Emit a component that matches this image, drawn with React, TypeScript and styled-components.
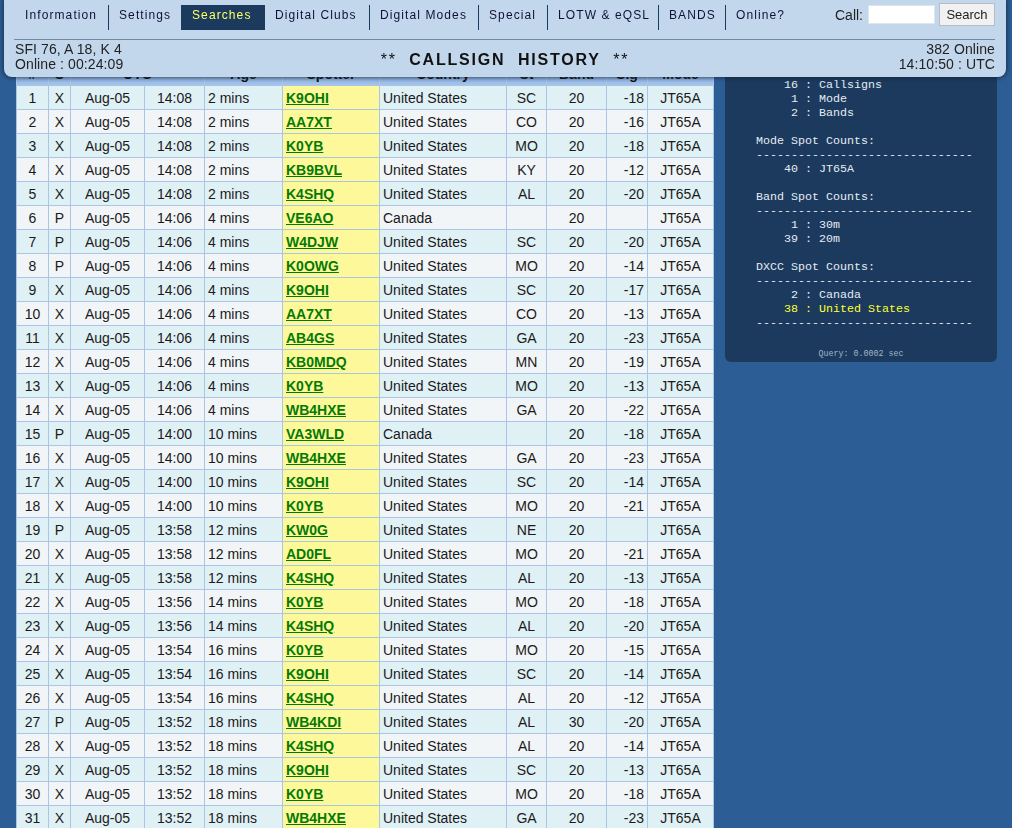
import styled, { createGlobalStyle } from "styled-components";

const GlobalStyle = createGlobalStyle`
  html, body {
    margin: 0;
    padding: 0;
    height: 828px;
    overflow: hidden;
    background: #2c5d95;
    font-family: "Liberation Sans", Arial, sans-serif;
  }
`;

type Spot = [string, string, string, string, string, string, string, string, string];

// flag, utc, age, spotter, country, state, band, sig, mode
const SPOTS: Spot[] = [
  ["X", "14:08", "2 mins", "K9OHI", "United States", "SC", "20", "-18", "JT65A"],
  ["X", "14:08", "2 mins", "AA7XT", "United States", "CO", "20", "-16", "JT65A"],
  ["X", "14:08", "2 mins", "K0YB", "United States", "MO", "20", "-18", "JT65A"],
  ["X", "14:08", "2 mins", "KB9BVL", "United States", "KY", "20", "-12", "JT65A"],
  ["X", "14:08", "2 mins", "K4SHQ", "United States", "AL", "20", "-20", "JT65A"],
  ["P", "14:06", "4 mins", "VE6AO", "Canada", "", "20", "", "JT65A"],
  ["P", "14:06", "4 mins", "W4DJW", "United States", "SC", "20", "-20", "JT65A"],
  ["P", "14:06", "4 mins", "K0OWG", "United States", "MO", "20", "-14", "JT65A"],
  ["X", "14:06", "4 mins", "K9OHI", "United States", "SC", "20", "-17", "JT65A"],
  ["X", "14:06", "4 mins", "AA7XT", "United States", "CO", "20", "-13", "JT65A"],
  ["X", "14:06", "4 mins", "AB4GS", "United States", "GA", "20", "-23", "JT65A"],
  ["X", "14:06", "4 mins", "KB0MDQ", "United States", "MN", "20", "-19", "JT65A"],
  ["X", "14:06", "4 mins", "K0YB", "United States", "MO", "20", "-13", "JT65A"],
  ["X", "14:06", "4 mins", "WB4HXE", "United States", "GA", "20", "-22", "JT65A"],
  ["P", "14:00", "10 mins", "VA3WLD", "Canada", "", "20", "-18", "JT65A"],
  ["X", "14:00", "10 mins", "WB4HXE", "United States", "GA", "20", "-23", "JT65A"],
  ["X", "14:00", "10 mins", "K9OHI", "United States", "SC", "20", "-14", "JT65A"],
  ["X", "14:00", "10 mins", "K0YB", "United States", "MO", "20", "-21", "JT65A"],
  ["P", "13:58", "12 mins", "KW0G", "United States", "NE", "20", "", "JT65A"],
  ["X", "13:58", "12 mins", "AD0FL", "United States", "MO", "20", "-21", "JT65A"],
  ["X", "13:58", "12 mins", "K4SHQ", "United States", "AL", "20", "-13", "JT65A"],
  ["X", "13:56", "14 mins", "K0YB", "United States", "MO", "20", "-18", "JT65A"],
  ["X", "13:56", "14 mins", "K4SHQ", "United States", "AL", "20", "-20", "JT65A"],
  ["X", "13:54", "16 mins", "K0YB", "United States", "MO", "20", "-15", "JT65A"],
  ["X", "13:54", "16 mins", "K9OHI", "United States", "SC", "20", "-14", "JT65A"],
  ["X", "13:54", "16 mins", "K4SHQ", "United States", "AL", "20", "-12", "JT65A"],
  ["P", "13:52", "18 mins", "WB4KDI", "United States", "AL", "30", "-20", "JT65A"],
  ["X", "13:52", "18 mins", "K4SHQ", "United States", "AL", "20", "-14", "JT65A"],
  ["X", "13:52", "18 mins", "K9OHI", "United States", "SC", "20", "-13", "JT65A"],
  ["X", "13:52", "18 mins", "K0YB", "United States", "MO", "20", "-18", "JT65A"],
  ["X", "13:52", "18 mins", "WB4HXE", "United States", "GA", "20", "-23", "JT65A"],
];

const COLUMNS: [string, number][] = [
  ["#", 1], ["S", 1], ["UTC", 2], ["Age", 1], ["Spotter", 1], ["Country", 1],
  ["St", 1], ["Band", 1], ["Sig", 1], ["Mode", 1],
];

const COL_WIDTHS = [32, 22, 74, 60, 78, 97, 127, 40, 60, 41, 66];

const NAV: [string, number][] = [
  ["Information", 94],
  ["Settings", 73],
  ["Searches", 83],
  ["Digital Clubs", 105],
  ["Digital Modes", 109],
  ["Special", 69],
  ["LOTW & eQSL", 111],
  ["BANDS", 67],
  ["Online?", 70],
];

const Header = styled.header`
  position: fixed;
  top: 0;
  left: 4px;
  width: 1002px;
  height: 77px;
  box-sizing: border-box;
  padding: 5px 11px 0 10px;
  background: #c3d7ec;
  border-radius: 0 0 8px 8px;
  box-shadow: 0 0 4px 1px rgba(20, 35, 55, 0.75);
  color: #111;
`;

const TopRow = styled.div`
  display: flex;
  justify-content: space-between;
  height: 34px;
  border-bottom: 1px solid #76889b;
`;

const Nav = styled.nav`
  display: flex;
  height: 25px;
  padding-left: 1px;
`;

const NavItem = styled.a<{ $active?: boolean; $last?: boolean; $width: number }>`
  display: block;
  box-sizing: border-box;
  width: ${(p) => p.$width}px;
  padding-left: 10px;
  line-height: 21px;
  font-size: 12px;
  letter-spacing: 1.1px;
  white-space: nowrap;
  color: ${(p) => (p.$active ? "#ffff66" : "#10103a")};
  background: ${(p) => (p.$active ? "#1c3a5e" : "transparent")};
  border-right: 1px solid ${(p) => (p.$last ? "transparent" : "#1c3a5e")};
`;

const SearchForm = styled.form`
  display: flex;
  align-items: flex-start;
  font-size: 14px;
  margin-top: -2px;
`;

const CallLabel = styled.label`
  margin: 4px 5px 0 0;
  color: #222;
`;

const CallInput = styled.input`
  width: 67px;
  height: 19px;
  margin: 2px 4px 0 0;
  padding: 0;
  box-sizing: border-box;
  border: 1px solid #dfe5ec;
  background: #fff;
`;

const SearchButton = styled.button`
  width: 56px;
  height: 23px;
  padding: 0;
  box-sizing: border-box;
  border: 1px solid #b8bcc2;
  background: #f1f1f1;
  color: #222;
  font-family: inherit;
  font-size: 13px;
`;

const BottomRow = styled.div`
  display: flex;
  justify-content: space-between;
  align-items: flex-start;
  font-size: 14px;
  line-height: 15px;
  padding: 2px 0 0 1px;
  color: #222;
`;

const SideInfo = styled.div<{ $right?: boolean }>`
  width: 200px;
  letter-spacing: 0.1px;
  text-align: ${(p) => (p.$right ? "right" : "left")};
`;

const Title = styled.div`
  margin-top: 8px;
  font-size: 16px;
  line-height: 19px;
  letter-spacing: 1.8px;
  white-space: pre;
  color: #111;
`;

const TitleText = styled.b`
  font-weight: bold;
`;

const Content = styled.main`
  display: flex;
  align-items: flex-start;
  gap: 11px;
  padding: 61px 0 0 16px;
`;

const Table = styled.table`
  width: 697px;
  table-layout: fixed;
  border-collapse: collapse;
  font-size: 14px;
  color: #1a1a1a;
  flex: none;
`;

const HeadCell = styled.th`
  height: 24px;
  padding: 0;
  box-sizing: border-box;
  font-size: 14px;
  font-weight: bold;
  color: #111;
  background: linear-gradient(#6f9bd6, #a4c4ec);
  border: 1px solid #a9c6e6;
`;

const Row = styled.tr<{ $odd: boolean }>`
  background: ${(p) => (p.$odd ? "#e0f1f6" : "#f1f5f7")};
`;

const Cell = styled.td<{ $align?: string; $spot?: boolean }>`
  height: 23px;
  padding: 0 3px;
  text-align: ${(p) => p.$align || "center"};
  white-space: nowrap;
  border: 1px solid #a9c6e6;
  background: ${(p) => (p.$spot ? "#fdf99b" : "transparent")};
`;

const SpotLink = styled.a`
  color: #047a04;
  font-weight: bold;
  text-decoration: underline;
`;

const StatsPanel = styled.aside`
  width: 272px;
  height: 301px;
  flex: none;
  box-sizing: border-box;
  padding: 17px 0 0 31px;
  background: #1c3a5e;
  border-radius: 0 0 6px 6px;
  font-family: "Liberation Mono", "Courier New", monospace;
  font-size: 11.67px;
  line-height: 14px;
  color: #e4ecf4;
  white-space: pre;
`;

const Line = styled.div<{ $gap?: boolean }>`
  height: 14px;
  margin-bottom: ${(p) => (p.$gap ? "14px" : "0")};
`;

const StatLine = styled(Line)<{ $hot?: boolean }>`
  padding-left: 28px;
  color: ${(p) => (p.$hot ? "#ffff33" : "inherit")};
`;

const Count = styled.span`
  display: inline-block;
  width: 14px;
  text-align: right;
`;

const QueryTime = styled.div`
  margin: 18px 0 0 -31px;
  text-align: center;
  font-size: 8.33px;
  line-height: 12px;
  color: #a3b4c6;
`;

const RULE = "-".repeat(31);

const Stat = ({ n, label, hot, gap }: { n: number; label: string; hot?: boolean; gap?: boolean }) => (
  <StatLine $hot={hot} $gap={gap}>
    <Count>{n}</Count>
    {` : ${label}`}
  </StatLine>
);

export default function App() {
  return (
    <>
      <GlobalStyle />
      <Header>
        <TopRow>
          <Nav>
            {NAV.map(([item, width], i) => (
              <NavItem key={item} $width={width} $active={item === "Searches"} $last={i === NAV.length - 1}>
                {item}
              </NavItem>
            ))}
          </Nav>
          <SearchForm>
            <CallLabel>Call:</CallLabel>
            <CallInput />
            <SearchButton type="button">Search</SearchButton>
          </SearchForm>
        </TopRow>
        <BottomRow>
          <SideInfo>
            SFI 76, A 18, K 4
            <br />
            Online : 00:24:09
          </SideInfo>
          <Title>
            {"**  "}
            <TitleText>CALLSIGN  HISTORY</TitleText>
            {"  **"}
          </Title>
          <SideInfo $right>
            382 Online
            <br />
            14:10:50 : UTC
          </SideInfo>
        </BottomRow>
      </Header>
      <Content>
        <Table>
          <colgroup>
            {COL_WIDTHS.map((w, i) => (
              <col key={i} width={w} />
            ))}
          </colgroup>
          <thead>
            <tr>
              {COLUMNS.map(([name, span]) => (
                <HeadCell key={name} colSpan={span}>
                  {name}
                </HeadCell>
              ))}
            </tr>
          </thead>
          <tbody>
            {SPOTS.map((s, i) => (
              <Row key={i} $odd={i % 2 === 0}>
                <Cell>{i + 1}</Cell>
                <Cell>{s[0]}</Cell>
                <Cell>Aug-05</Cell>
                <Cell>{s[1]}</Cell>
                <Cell $align="left">{s[2]}</Cell>
                <Cell $align="left" $spot>
                  <SpotLink>{s[3]}</SpotLink>
                </Cell>
                <Cell $align="left">{s[4]}</Cell>
                <Cell>{s[5]}</Cell>
                <Cell>{s[6]}</Cell>
                <Cell $align="right">{s[7]}</Cell>
                <Cell>{s[8]}</Cell>
              </Row>
            ))}
          </tbody>
        </Table>
        <StatsPanel>
          <Stat n={16} label="Callsigns" />
          <Stat n={1} label="Mode" />
          <Stat n={2} label="Bands" gap />
          <Line>Mode Spot Counts:</Line>
          <Line>{RULE}</Line>
          <Stat n={40} label="JT65A" gap />
          <Line>Band Spot Counts:</Line>
          <Line>{RULE}</Line>
          <Stat n={1} label="30m" />
          <Stat n={39} label="20m" gap />
          <Line>DXCC Spot Counts:</Line>
          <Line>{RULE}</Line>
          <Stat n={2} label="Canada" />
          <Stat n={38} label="United States" hot />
          <Line>{RULE}</Line>
          <QueryTime>Query: 0.0002 sec</QueryTime>
        </StatsPanel>
      </Content>
    </>
  );
}
